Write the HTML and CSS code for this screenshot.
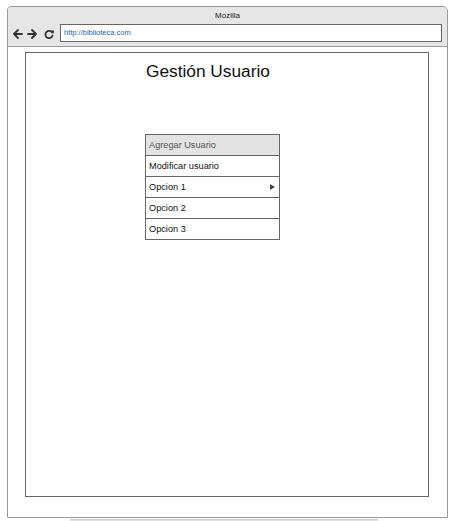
FILE: index.html
```html
<!DOCTYPE html>
<html>
<head>
<meta charset="utf-8">
<link rel="stylesheet" href="styles.css">
</head>
<body>
<div class="window">
  <div class="titlebar">
    <div class="title">Mozilla</div>
    <div class="navrow">
      <div class="navicons">
        <svg width="48" height="12" viewBox="0 0 48 12">
          <g fill="none" stroke="#333" stroke-width="1.8" stroke-linecap="round" stroke-linejoin="round">
            <path d="M10 6 H2 M6 2 L2 6 L6 10"/>
            <path d="M16 6 H24 M20 2 L24 6 L20 10"/>
            <path d="M40 4.5 A3.6 3.6 0 1 0 40.5 7.5"/>
          </g>
          <path d="M38.4 2.4 L41.8 2.4 L41.8 5.8 Z" fill="#333"/>
        </svg>
      </div>
      <div class="address">http://biblioteca.com</div>
    </div>
  </div>
  <div class="content">
    <div class="frame">
      <h1 class="heading">Gestión Usuario</h1>
      <ul class="menu">
        <li class="item selected">Agregar Usuario</li>
        <li class="item">Modificar usuario</li>
        <li class="item">Opcion 1<span class="arrow"></span></li>
        <li class="item">Opcion 2</li>
        <li class="item">Opcion 3</li>
      </ul>
    </div>
  </div>
</div>
<div class="bottombar"></div>
</body>
</html>
```
FILE: styles.css
```css
html, body {
  margin: 0;
  padding: 0;
  background: #fff;
  font-family: "Liberation Sans", Arial, sans-serif;
}
.window {
  box-sizing: border-box;
  margin: 6px 0 0 7px;
  width: 441px;
  height: 512px;
  border: 1px solid #999;
  border-radius: 4px 5px 0 0;
  overflow: hidden;
  background: #fff;
}
.titlebar {
  box-sizing: border-box;
  height: 40px;
  background: #e6e6e6;
  border-bottom: 1px solid #999;
}
.title {
  height: 17px;
  line-height: 18px;
  text-align: center;
  font-size: 8px;
  color: #222;
}
.navrow {
  display: flex;
  align-items: center;
  height: 18px;
}
.navicons {
  width: 52px;
  display: flex;
  align-items: center;
  padding-left: 4px;
  box-sizing: border-box;
  height: 18px;
}
.navicons svg { display: block; margin-top: 2px; }
.address {
  box-sizing: border-box;
  width: 382px;
  height: 18px;
  border: 1px solid #666;
  background: #fff;
  color: #1f63b5;
  font-size: 7.5px;
  line-height: 16px;
  padding-left: 3px;
}
.content {
  padding: 5px 0 0 17px;
}
.frame {
  box-sizing: border-box;
  width: 404px;
  height: 445px;
  border: 1px solid #666;
  padding: 0 0 0 119px;
}
.heading {
  margin: 8px 0 0 1px;
  font-weight: normal;
  font-size: 17.3px;
  line-height: 20px;
  color: #111;
}
.menu {
  list-style: none;
  margin: 53px 0 0 0;
  padding: 0;
  width: 135px;
  border: 1px solid #666;
  box-sizing: border-box;
}
.item {
  position: relative;
  box-sizing: border-box;
  height: 21px;
  line-height: 20px;
  font-size: 9.2px;
  color: #111;
  padding-left: 3px;
  border-top: 1px solid #666;
  background: #fff;
}
.item:first-child { border-top: none; height: 20px; }
.item.selected {
  background: #e3e3e3;
  color: #555;
}
.arrow {
  position: absolute;
  right: 4px;
  top: 7px;
  width: 0;
  height: 0;
  border-left: 5px solid #444;
  border-top: 3px solid transparent;
  border-bottom: 3px solid transparent;
}
.bottombar {
  margin: 1px 0 0 70px;
  width: 308px;
  height: 3px;
  background: #e2e2e2;
  border-top: 1px solid #ccc;
}
```
